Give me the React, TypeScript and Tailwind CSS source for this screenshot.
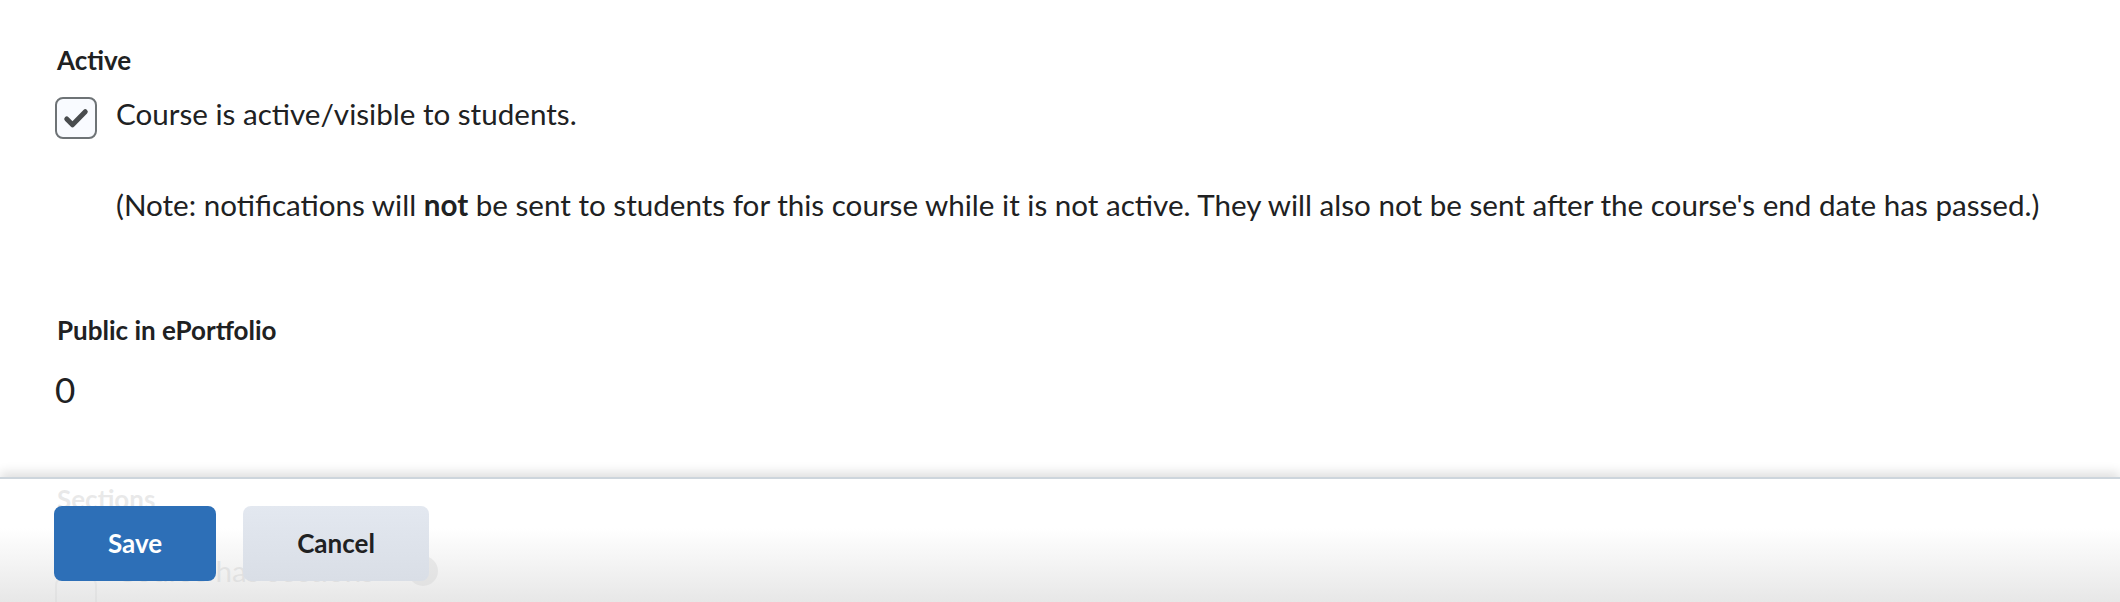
const CheckBox = ({ checked, className = "" }: { checked: boolean; className?: string }) => (
  <span
    className={`flex h-[42px] w-[42px] shrink-0 items-center justify-center rounded-[8px] border-2 border-[#6e7376] bg-[#f9fbff] ${className}`}
  >
    {checked && (
      <svg viewBox="0 0 24 24" className="h-[30px] w-[30px]" fill="none">
        <path
          d="M4.6 12.8l4.6 4.6L19.4 7"
          stroke="#494c4e"
          strokeWidth="4"
          strokeLinecap="round"
          strokeLinejoin="round"
        />
      </svg>
    )}
  </span>
);

const HelpIcon = () => (
  <svg viewBox="0 0 30 30" className="h-[30px] w-[30px] shrink-0">
    <circle cx="15" cy="15" r="15" fill="#494c4e" />
    <path
      d="M11 11.5a4 4 0 1 1 5.6 3.7c-1 .45-1.6 1.2-1.6 2.3v.8"
      stroke="#fff"
      strokeWidth="2.6"
      strokeLinecap="round"
      fill="none"
    />
    <circle cx="15" cy="22.3" r="1.7" fill="#fff" />
  </svg>
);

export default function App() {
  return (
    <div className="relative h-[602px] w-[2120px] overflow-hidden bg-white font-['Lato',sans-serif] text-[#202122]">
      {/* form body */}
      <div className="pl-[55px] pt-[44px]">
        <div className="pl-[2px] text-[26px] font-bold leading-[32px]">Active</div>

        <label className="mt-[21px] flex items-center gap-[19px]">
          <CheckBox checked />
          <span className="-mt-[8px] text-[29.6px] leading-[36px]">Course is active/visible to students.</span>
        </label>

        <p className="mt-[46px] pl-[61px] text-[29.6px] leading-[40px]">
          (Note: notifications will <b>not</b> be sent to students for this course while it is not
          active. They will also not be sent after the course's end date has passed.)
        </p>

        <div className="mt-[89px] pl-[2px] text-[26px] font-bold leading-[32px]">Public in ePortfolio</div>
        <div className="mt-[21px] text-[35px] leading-[44px]">0</div>

        <div className="mt-[72px] pl-[2px] text-[26px] font-bold leading-[32px]">Sections</div>
        <div className="mt-[36px] flex items-start gap-[19px]">
          <CheckBox checked={false} className="mt-[26px]" />
          <span className="text-[29.6px] leading-[40px]">Course has sections</span>
          <span className="ml-[15px] mt-[5px]">
            <HelpIcon />
          </span>
        </div>
      </div>

      {/* floating buttons bar */}
      <div className="absolute inset-x-0 bottom-0 h-[125px] border-t-2 border-[#cdd5dc] bg-gradient-to-b from-white/90 from-40% to-[#e6e6e6]/95 shadow-[0_-5px_10px_rgba(0,0,0,0.12)]">
        <div className="flex gap-[27px] pl-[54px] pt-[27px]">
          <button className="h-[75px] w-[162px] rounded-[8px] bg-[#2d6fb7] text-[26px] font-bold text-white">
            Save
          </button>
          <button className="h-[75px] w-[186px] rounded-[8px] bg-gradient-to-b from-[#e3e8f0] to-[#d9dee6] text-[26px] font-bold text-[#202122]">
            Cancel
          </button>
        </div>
      </div>
    </div>
  );
}
